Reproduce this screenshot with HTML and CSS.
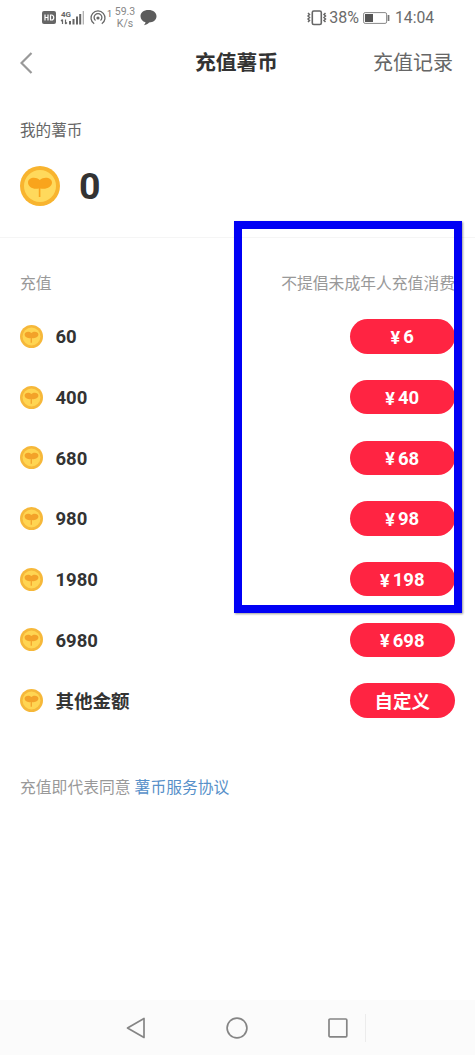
FILE: index.html
```html
<!DOCTYPE html>
<html lang="zh-CN">
<head>
<meta charset="utf-8">
<title>充值薯币</title>
<link rel="stylesheet" href="styles.css">
</head>
<body>
<svg class="defs" width="0" height="0" aria-hidden="true">
  <symbol id="coin" viewBox="0 0 40 40">
    <circle cx="20" cy="20" r="20" fill="#f8b42f"/>
    <circle cx="20" cy="20" r="16" fill="#ffd95c"/>
    <path d="M18.800 22.500C13 24 8 20.500 8 16.500c0-5 7.500-6.500 11.800-2.500C24 10 32 11.500 32 16.500c0 4-5.500 7.500-11.600 6V31h-1.600z" fill="#f9a41c"/>
  </symbol>
  <symbol id="coin-small" viewBox="0 0 40 40">
    <circle cx="20" cy="20" r="20" fill="#f6b83a"/>
    <circle cx="20" cy="20" r="15.500" fill="#ffd552"/>
    <path d="M18.500 22.500C13 24 8 20.500 8 16.500c0-5 7.500-6.500 11.800-2.500C24 10 32 11.500 32 16.500c0 4-5.500 7.500-11.300 6V31h-2.200z" fill="#f3a229"/>
  </symbol>
</svg>
<div class="screen">
  <div class="status">
    <div class="status-left">
      <svg width="70" height="22" viewBox="0 0 70 22">
        <rect x="0" y="4" width="14" height="13" rx="2" fill="#666"/>
        <path d="M3 7.500v6M6 7.500v6M3 10.500h3M8.500 8v5h1c3 0 3-5 0-5z" fill="none" stroke="#fff" stroke-width="1.200"/>
        <text class="net" x="19" y="10">4G</text>
        <path d="M20.500 17v-4.500m-1.500 1.500 1.500-1.500M23.500 12.500V17m1.500-1.500L23.500 17" fill="none" stroke="#666" stroke-width="1.200"/>
        <path d="M28 14v3.500M31.500 12v5.500M35 9.500v8M38.200 7v10.500" stroke="#666" stroke-width="2"/>
        <path d="M41.300 4v13.500" stroke="#aaa" stroke-width="1.200"/>
        <g fill="none" stroke="#666" stroke-width="1.300">
          <path d="M52.200 16.800a7 7 0 1 1 7.600 0"/>
          <path d="M53.500 13.500a3.900 3.900 0 1 1 5 0"/>
        </g>
        <circle cx="56" cy="11" r="1.600" fill="#666"/>
        <text class="one" x="65" y="10">1</text>
      </svg>
      <div class="speed"><span>59.3</span><span>K/s</span></div>
      <svg class="bubble" width="17" height="16" viewBox="0 0 17 16"><path d="M8.500 0C3.500 0 .5 2.700.5 6.300c0 3 2 5.200 5 6 0 1-.8 2.200-1.600 2.900 2.200-.2 4-1.200 5.200-2.600 4.300-.2 7.400-2.700 7.400-6.300C16.500 2.700 13.300 0 8.500 0z" fill="#5c5c5c"/></svg>
    </div>
    <div class="status-right">
      <svg width="20" height="16" viewBox="0 0 20 16" fill="none" stroke="#666"><rect x="5.300" y="1" width="9" height="13.500" rx="1.500" stroke-width="1.600"/><path d="M1 3l1.500 1.500L1 6l1.500 1.500L1 9l1.500 1.500L1 12M18.500 3L17 4.500 18.500 6 17 7.500 18.500 9 17 10.500l1.500 1.500" stroke-width="1.500"/></svg>
      <span class="percent">38%</span>
      <svg class="battery" width="27" height="12" viewBox="0 0 27 12"><rect x=".6" y=".6" width="23" height="10.800" rx="1.500" fill="none" stroke="#888"/><rect x="2" y="2" width="8" height="8" fill="#555"/><path d="M25.500 3v6" stroke="#777" stroke-width="1.800"/></svg>
      <span class="clock">14:04</span>
    </div>
  </div>

  <header class="header">
    <svg class="back" width="13" height="22" viewBox="0 0 13 22"><path d="M11.500 1L1.500 11l10 10" fill="none" stroke="#999" stroke-width="2.200"/></svg>
    <h1 class="title">充值薯币</h1>
    <span class="record">充值记录</span>
  </header>

  <section class="wallet">
    <div class="wallet-label">我的薯币</div>
    <div class="balance"><svg width="40" height="40"><use href="#coin"/></svg><span>0</span></div>
  </section>

  <section class="recharge">
    <div class="recharge-head"><span>充值</span><span>不提倡未成年人充值消费</span></div>
    <div class="rows">
      <div class="row"><svg class="coin"><use href="#coin-small"/></svg><span class="amount">60</span><span class="pill"><i>¥</i>6</span></div>
      <div class="row"><svg class="coin"><use href="#coin-small"/></svg><span class="amount">400</span><span class="pill"><i>¥</i>40</span></div>
      <div class="row"><svg class="coin"><use href="#coin-small"/></svg><span class="amount">680</span><span class="pill"><i>¥</i>68</span></div>
      <div class="row"><svg class="coin"><use href="#coin-small"/></svg><span class="amount">980</span><span class="pill"><i>¥</i>98</span></div>
      <div class="row"><svg class="coin"><use href="#coin-small"/></svg><span class="amount">1980</span><span class="pill"><i>¥</i>198</span></div>
      <div class="row"><svg class="coin"><use href="#coin-small"/></svg><span class="amount">6980</span><span class="pill"><i>¥</i>698</span></div>
      <div class="row"><svg class="coin"><use href="#coin-small"/></svg><span class="amount cjk">其他金额</span><span class="pill cjk">自定义</span></div>
    </div>
    <p class="agree">充值即代表同意<a>薯币服务协议</a></p>
  </section>

  <nav class="nav">
    <svg width="20" height="22" viewBox="0 0 20 22"><path d="M18 1.500v19L1.500 11z" stroke-linejoin="round"/></svg>
    <svg width="22" height="22" viewBox="0 0 22 22"><circle cx="11" cy="11" r="9.900"/></svg>
    <svg width="20" height="20" viewBox="0 0 20 20"><rect x="1" y="1" width="17.800" height="17.800" rx="1"/></svg>
    <span class="nav-line"></span>
  </nav>
  <div class="highlight"></div>
</div>
</body>
</html>
```
FILE: styles.css
```css
body {
  margin: 0;
  background: #fff;
  font-family: Roboto, "Noto Sans CJK SC", sans-serif;
  color: #333;
}
.defs { position: absolute; }
.screen {
  position: relative;
  display: flex;
  flex-direction: column;
  width: 475px;
  height: 1055px;
  overflow: hidden;
}
svg { display: block; flex: none; }

.status {
  display: flex;
  justify-content: space-between;
  align-items: center;
  box-sizing: border-box;
  height: 35px;
  padding: 0 42px;
  color: #6b6b6b;
}
.status-left, .status-right { display: flex; align-items: center; }
.net { font: 700 8px Roboto, sans-serif; fill: #666; }
.one { font: 9px Roboto, sans-serif; fill: #666; }
.speed {
  display: flex;
  flex-direction: column;
  align-items: center;
  width: 26px;
  font-size: 10.5px;
  line-height: 12px;
  color: #888;
}
.bubble { margin-left: 2px; }
.percent { margin-left: 2px; font-size: 16px; }
.battery { margin: 0 5px 0 4px; }
.clock { width: 38px; font-size: 15.7px; }

.header {
  display: grid;
  grid-template-columns: 1fr auto 1fr;
  align-items: center;
  height: 56px;
  padding: 0 22px 0 20px;
}
.title { margin: 0; font-size: 20.8px; line-height: 30px; font-weight: 700; }
.record { justify-self: end; font-size: 20px; line-height: 30px; color: #666; }

.wallet {
  box-sizing: border-box;
  height: 147px;
  padding: 28px 20px 0;
  border-bottom: 1px solid #f5f5f5;
}
.wallet-label { font-size: 15.6px; line-height: 24px; color: #666; }
.balance {
  display: flex;
  align-items: center;
  gap: 19px;
  margin-top: 23px;
  font-size: 37.5px;
  line-height: 40px;
  font-weight: 700;
}

.recharge { flex: 1; padding: 34px 20px 0; }
.recharge-head {
  display: flex;
  justify-content: space-between;
  font-size: 15.8px;
  line-height: 24px;
  color: #999;
}
.rows { padding-top: 10px; }
.row { display: flex; align-items: center; height: 60.7px; }
.coin { width: 23px; height: 23px; }
.amount {
  flex: 1;
  margin-left: 12.5px;
  padding-top: 2px;
  font-size: 18.5px;
  font-weight: 700;
}
.pill {
  display: flex;
  align-items: center;
  justify-content: center;
  box-sizing: border-box;
  width: 105.5px;
  height: 34.4px;
  padding-top: 2px;
  border-radius: 18px;
  background: #ff2442;
  color: #fff;
  font-size: 18.5px;
  font-weight: 700;
}
.amount.cjk, .pill.cjk { padding-top: 0; }
.pill i { margin-right: 3px; font-style: normal; font-size: 18px; }
.agree { margin: 45px 0 0; font-size: 15.8px; line-height: 24px; color: #999; }
.agree a { margin-left: 4px; color: #5790c9; }

.nav {
  display: flex;
  align-items: center;
  box-sizing: border-box;
  height: 55px;
  padding-left: 126px;
  background: #fbfbfb;
  fill: none;
  stroke: #858585;
  stroke-width: 1.7;
}
.nav svg + svg { margin-left: 80px; }
.nav-line { width: 1px; height: 28px; margin-left: 17px; background: #ececec; }

.highlight {
  position: absolute;
  left: 234px;
  top: 221px;
  width: 228px;
  height: 392px;
  box-sizing: border-box;
  border: 8px solid #0000f5;
  box-shadow: 1px 1px 2px #0006;
}
```
